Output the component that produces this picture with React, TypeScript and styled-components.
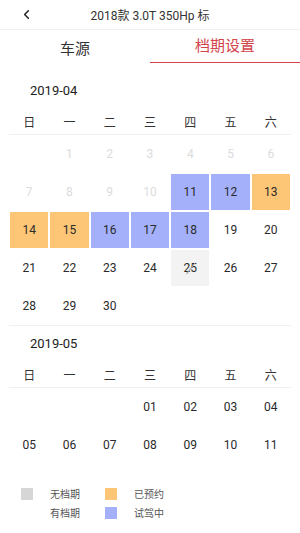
import React from 'react';
import styled, { createGlobalStyle } from 'styled-components';
import { ChevronLeft } from 'lucide-react';

const GlobalStyle = createGlobalStyle`
  body {
    margin: 0;
    background: #fff;
    font-family: Roboto, "Noto Sans", "Noto Sans CJK SC", sans-serif;
    color: #333;
  }
`;

const Page = styled.div`
  width: 300px;
  height: 533px;
  overflow: hidden;
  background: #fff;
`;

const Header = styled.div`
  height: 30px;
  display: grid;
  grid-template-columns: 50px 1fr 50px;
  align-items: center;
  border-bottom: 1px solid #f1f1f1;
  box-sizing: border-box;
`;

const BackButton = styled.div`
  display: flex;
  align-items: center;
  padding-left: 19px;
  color: #222;
`;

const Title = styled.div`
  text-align: center;
  font-size: 12px;
  color: #333;
`;

const Tabs = styled.div`
  display: flex;
  height: 33px;
`;

const Tab = styled.div<{ $active?: boolean }>`
  flex: 1;
  display: flex;
  align-items: center;
  justify-content: center;
  font-size: 15px;
  box-sizing: border-box;
  color: ${(p) => (p.$active ? '#d2434a' : '#333')};
  border-bottom: 1px solid ${(p) => (p.$active ? '#d2434a' : 'transparent')};
  padding-bottom: ${(p) => (p.$active ? '4px' : '0')};
  padding-top: ${(p) => (p.$active ? '0' : '2px')};
`;

const MonthList = styled.div`
  padding-top: 10px;
`;

const Month = styled.div<{ $divider?: boolean }>`
  margin: 0 9px;
  border-bottom: 1px solid ${(p) => (p.$divider ? '#f1f1f1' : 'transparent')};
`;

const MonthTitle = styled.div`
  height: 36px;
  line-height: 36px;
  padding-left: 21px;
  font-size: 13px;
  color: #222;
`;

const WeekRow = styled.div`
  display: grid;
  grid-template-columns: repeat(7, 1fr);
  height: 26px;
  align-items: center;
  border-bottom: 1px solid #f1f1f1;
  box-sizing: border-box;
  font-size: 12px;
  font-family: "Noto Sans CJK SC", sans-serif;
  color: #333;
  text-align: center;
`;

const DayGrid = styled.div`
  display: grid;
  grid-template-columns: repeat(7, 1fr);
  grid-auto-rows: 38px;
`;

type DayState = 'past' | 'normal' | 'booked' | 'driving' | 'none' | 'empty';

const bg: Record<DayState, string> = {
  past: 'transparent',
  normal: 'transparent',
  booked: '#fdc677',
  driving: '#a4b1fa',
  none: '#f3f3f3',
  empty: 'transparent',
};

const Day = styled.div<{ $state: DayState }>`
  margin: 1px;
  display: flex;
  align-items: center;
  justify-content: center;
  font-size: 12px;
  background: ${(p) => bg[p.$state]};
  color: ${(p) => (p.$state === 'past' ? '#dcdcdc' : '#2a2a2a')};
`;

const Struck = styled.span`
  position: relative;

  &::after {
    content: '';
    position: absolute;
    left: 0;
    right: 0;
    top: 50%;
    height: 1px;
    background: #9a9a9a;
    transform: rotate(-52deg);
  }
`;

const Legend = styled.div`
  padding: 19px 0 0 21px;
  display: grid;
  grid-template-columns: 84px 84px;
  grid-auto-rows: 19px;
`;

const LegendItem = styled.div`
  display: flex;
  align-items: center;
  font-size: 10px;
  font-family: "Noto Sans CJK SC", sans-serif;
  color: #555;
`;

const Swatch = styled.span<{ $color: string }>`
  width: 12px;
  height: 12px;
  margin-right: 17px;
  background: ${(p) => p.$color};
`;

const weekdays = ['日', '一', '二', '三', '四', '五', '六'];

type Cell = { label: string; state: DayState };

const april: Cell[] = [
  { label: '', state: 'empty' },
  ...Array.from({ length: 30 }, (_, i) => {
    const d = i + 1;
    let state: DayState = 'normal';
    if (d <= 10) state = 'past';
    else if ([11, 12, 16, 17, 18].includes(d)) state = 'driving';
    else if ([13, 14, 15].includes(d)) state = 'booked';
    else if (d === 25) state = 'none';
    return { label: String(d), state };
  }),
];

const may: Cell[] = [
  ...Array.from({ length: 3 }, () => ({ label: '', state: 'empty' as DayState })),
  ...Array.from({ length: 11 }, (_, i) => ({
    label: String(i + 1).padStart(2, '0'),
    state: 'normal' as DayState,
  })),
];

const MonthBlock: React.FC<{ title: string; cells: Cell[]; divider?: boolean }> = ({
  title,
  cells,
  divider,
}) => (
  <Month $divider={divider}>
    <MonthTitle>{title}</MonthTitle>
    <WeekRow>
      {weekdays.map((w) => (
        <span key={w}>{w}</span>
      ))}
    </WeekRow>
    <DayGrid>
      {cells.map((c, i) => (
        <Day key={i} $state={c.state}>
          {c.state === 'none' ? <Struck>{c.label}</Struck> : c.label}
        </Day>
      ))}
    </DayGrid>
  </Month>
);

export default function App() {
  return (
    <Page>
      <GlobalStyle />
      <Header>
        <BackButton>
          <ChevronLeft size={15} strokeWidth={2.4} />
        </BackButton>
        <Title>2018款 3.0T 350Hp 标</Title>
        <span />
      </Header>
      <Tabs>
        <Tab>车源</Tab>
        <Tab $active>档期设置</Tab>
      </Tabs>
      <MonthList>
        <MonthBlock title="2019-04" cells={april} divider />
        <MonthBlock title="2019-05" cells={may} />
      </MonthList>
      <Legend>
        <LegendItem>
          <Swatch $color="#d6d6d6" />
          无档期
        </LegendItem>
        <LegendItem>
          <Swatch $color="#fdc677" />
          已预约
        </LegendItem>
        <LegendItem>
          <Swatch $color="#fff" />
          有档期
        </LegendItem>
        <LegendItem>
          <Swatch $color="#a4b1fa" />
          试驾中
        </LegendItem>
      </Legend>
    </Page>
  );
}
